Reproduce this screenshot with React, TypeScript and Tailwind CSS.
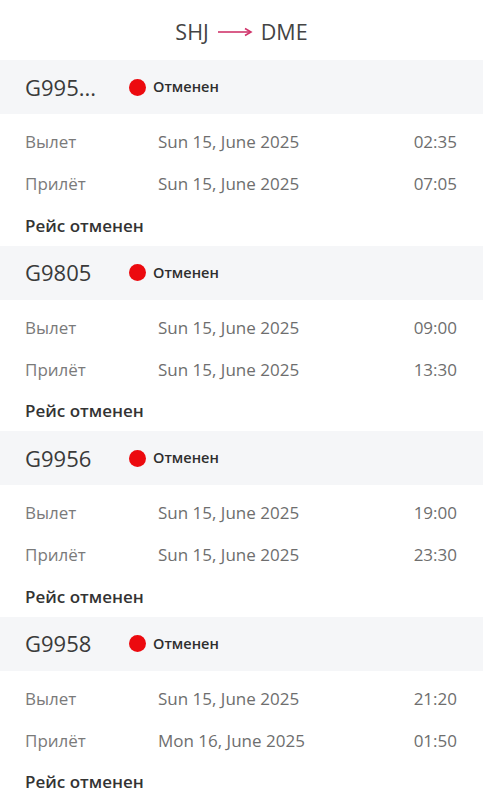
import React from 'react';

interface Flight {
  number: string;
  depDate: string;
  depTime: string;
  arrDate: string;
  arrTime: string;
}

const FLIGHTS: Flight[] = [
  { number: 'G995...', depDate: 'Sun 15, June 2025', depTime: '02:35', arrDate: 'Sun 15, June 2025', arrTime: '07:05' },
  { number: 'G9805', depDate: 'Sun 15, June 2025', depTime: '09:00', arrDate: 'Sun 15, June 2025', arrTime: '13:30' },
  { number: 'G9956', depDate: 'Sun 15, June 2025', depTime: '19:00', arrDate: 'Sun 15, June 2025', arrTime: '23:30' },
  { number: 'G9958', depDate: 'Sun 15, June 2025', depTime: '21:20', arrDate: 'Mon 16, June 2025', arrTime: '01:50' },
];

const Row: React.FC<{ label: string; date: string; time: string }> = ({ label, date, time }) => (
  <div className="flex items-center h-[42px] px-[25px] text-[17px] text-[#7a7a7a]">
    <span className="w-[133px]">{label}</span>
    <span className="flex-1 text-[#6e6e6e]">{date}</span>
    <span className="text-[#6e6e6e] pr-[1px]">{time}</span>
  </div>
);

const FlightCard: React.FC<{ flight: Flight }> = ({ flight }) => (
  <div>
    <div className="flex items-center h-[54px] bg-[#f5f6f8] px-[25px]">
      <span className="w-[104px] text-[22px] text-[#3a3a3a]">{flight.number}</span>
      <span className="w-[17px] h-[17px] rounded-full bg-[#ec0a0f]" />
      <span className="ml-[7px] text-[14.5px] font-semibold text-[#2e2e2e]">Отменен</span>
    </div>
    <div className="pt-[7px]">
      <Row label="Вылет" date={flight.depDate} time={flight.depTime} />
      <Row label="Прилёт" date={flight.arrDate} time={flight.arrTime} />
      <div className="flex items-center h-[40.5px] px-[25px] text-[17px] font-semibold text-[#333]">Рейс отменен</div>
    </div>
  </div>
);

export default function App() {
  return (
    <div className="w-[483px] h-[800px] overflow-hidden bg-white font-['Open_Sans',sans-serif]">
      <div className="flex items-center justify-center h-[60px] pt-[4px] text-[21.5px] text-[#444]">
        <span>SHJ</span>
        <svg width="36" height="10" viewBox="0 0 36 10" className="mx-[8px]">
          <line x1="1" y1="5" x2="33" y2="5" stroke="#d0356b" strokeWidth="1.6" />
          <path d="M28 1.5 L34 5 L28 8.5" fill="none" stroke="#d0356b" strokeWidth="1.6" />
        </svg>
        <span>DME</span>
      </div>
      {FLIGHTS.map((f) => (
        <FlightCard key={f.number} flight={f} />
      ))}
    </div>
  );
}
